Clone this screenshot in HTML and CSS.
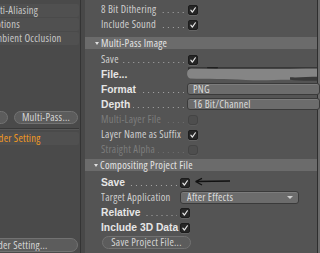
FILE: index.html
```html
<!DOCTYPE html>
<html>
<head>
<meta charset="utf-8">
<link rel="stylesheet" href="styles.css">
</head>
<body>
<div class="app">
  <div class="left">
    <div class="left-inner">
      <div class="item">Anti-Aliasing</div>
      <div class="item">Options</div>
      <div class="item">Ambient Occlusion</div>
      <div class="btn-row">
        <button class="pill btn-l">Buffer View...</button>
        <button class="pill btn-mp">Multi-Pass...</button>
      </div>
      <div class="sep"></div>
      <div class="item active">Render Setting</div>
      <button class="pill btn-bottom">Render Setting...</button>
    </div>
  </div>
  <div class="divider"></div>
  <div class="main">
    <div class="row"><div class="lead"><span>8 Bit Dithering</span><span class="dots"></span></div><span class="cb on"><svg viewBox="0 0 10 10"><path d="M2.3 5.2 L4.2 7.6 L8 2.2"/></svg></span></div>
    <div class="row"><div class="lead"><span>Include Sound</span><span class="dots"></span></div><span class="cb on"><svg viewBox="0 0 10 10"><path d="M2.3 5.2 L4.2 7.6 L8 2.2"/></svg></span></div>

    <div class="hdr"><span class="tri"></span>Multi-Pass Image</div>

    <div class="row"><div class="lead"><span>Save</span><span class="dots"></span></div><span class="cb on"><svg viewBox="0 0 10 10"><path d="M2.3 5.2 L4.2 7.6 L8 2.2"/></svg></span></div>
    <div class="row"><div class="lead"><span class="b">File...</span></div>
      <svg class="scribble" width="133" height="15" viewBox="0 0 133 15">
        <path d="M2 0.2 C30 0 80 0.5 133 0.3 L133 3.2 C80 3.4 30 3 2 3.4 Z" fill="#2f2f2f"/>
        <path d="M21 0 L32 0 L31 4.5 L22 4.5 Z" fill="#1f1f1f"/>
        <path d="M5 1.6 C0.5 2 -0.5 9.5 4 11.5 C20 12.5 40 11.5 60 13 C80 14 95 12.3 105 12.8 C115 13.2 125 12.3 133 12.3 L133 1.6 C100 2 60 1.4 30 1.8 Z" fill="#858585"/>
        <path d="M104 10.3 C112 10.8 122 9.8 133 9.8 L133 13.8 C120 14 110 13.8 104 12.8 Z" fill="#3a3a3a"/>
      </svg>
    </div>
    <div class="row"><div class="lead"><span class="b">Format</span><span class="dots"></span></div><div class="dd wide">PNG</div></div>
    <div class="row"><div class="lead"><span class="b">Depth</span><span class="dots"></span></div><div class="dd wide">16 Bit/Channel</div></div>
    <div class="row dis"><div class="lead"><span>Multi-Layer File</span><span class="dots"></span></div><span class="cb off"></span></div>
    <div class="row"><div class="lead"><span>Layer Name as Suffix</span></div><span class="cb on"><svg viewBox="0 0 10 10"><path d="M2.3 5.2 L4.2 7.6 L8 2.2"/></svg></span></div>
    <div class="row dis"><div class="lead"><span>Straight Alpha</span><span class="dots"></span></div><span class="cb off"></span></div>

    <div class="hdr hdr2"><span class="tri"></span>Compositing Project File</div>

    <div class="sec2">
      <div class="row"><div class="lead"><span class="b">Save</span><span class="dots"></span></div>
        <div class="ctl"><span class="cb on"><svg viewBox="0 0 10 10"><path d="M2.3 5.2 L4.2 7.6 L8 2.2"/></svg></span>
          <svg class="arrow" width="40" height="15" viewBox="0 0 40 15"><path d="M2.5 6.5 L37 6 M2.5 6.5 L9 3.3 M2.5 6.5 L9 10" stroke="#111" stroke-width="1.3" fill="none"/></svg>
        </div>
      </div>
      <div class="row"><div class="lead"><span>Target Application</span></div><div class="dd app-dd">After Effects<span class="arr"></span></div></div>
      <div class="row"><div class="lead"><span class="b">Relative</span><span class="dots"></span></div><span class="cb on"><svg viewBox="0 0 10 10"><path d="M2.3 5.2 L4.2 7.6 L8 2.2"/></svg></span></div>
      <div class="row"><div class="lead"><span class="b">Include 3D Data</span></div><span class="cb on"><svg viewBox="0 0 10 10"><path d="M2.3 5.2 L4.2 7.6 L8 2.2"/></svg></span></div>
      <button class="pill btn-save">Save Project File...</button>
    </div>
  </div>
  <div class="edge"></div>
</div>
</body>
</html>
```
FILE: styles.css
```css
* { box-sizing: border-box; margin: 0; padding: 0; }
html, body { width: 320px; height: 253px; overflow: hidden; background: #545454; }
body {
  font-family: "Open Sans", "Liberation Sans", sans-serif;
  font-stretch: 85%;
  font-size: 10.5px;
  letter-spacing: 0.25px;
  color: #cfcfcf;
}
.app { display: flex; width: 320px; height: 253px; }

/* left column */
.left { width: 80px; flex: none; background: #4a4a4a; overflow: hidden; }
.left-inner {
  margin-left: -16px; width: 95px; height: 100%;
  display: flex; flex-direction: column; padding-top: 4px;
}
.item {
  height: 13px; line-height: 13px; margin-bottom: 1px; flex: none;
  background: #505050; padding-left: 6px; white-space: nowrap;
  border-radius: 0 2px 2px 0; color: #c8c8c8;
}
.item.active { color: #f39a22; padding-left: 0; margin-top: 2px; }
.btn-row { margin-top: 65px; display: flex; justify-content: flex-end; gap: 6px; padding-right: 1px; }
.pill {
  appearance: none; font: inherit; letter-spacing: inherit; height: 13px; line-height: 11px;
  border-radius: 7px; background: #5c5c5c; border: 1px solid #727272;
  color: #d6d6d6; text-align: center; white-space: nowrap; overflow: hidden; flex: none;
}
.btn-l { width: 84px; }
.btn-mp { width: 64px; }
.sep { height: 2px; margin-top: 4px; border-top: 1px solid #383838; border-bottom: 1px solid #575757; flex: none; }
.btn-bottom { width: 125px; margin-left: -31px; margin-top: auto; margin-bottom: 1px; height: 14px; line-height: 12px; }

.divider { width: 5px; flex: none; background: #484848; border-left: 1px solid #343434; }

/* main */
.main { width: 232px; flex: none; padding-top: 2px; display: flex; flex-direction: column; }
.row {
  display: grid; grid-template-columns: 86px auto; align-items: center;
  height: 15px; line-height: 15px; padding-left: 16px; flex: none; white-space: nowrap;
}
.lead { display: flex; height: 15px; padding-right: 3px; overflow: hidden; }
.dots {
  flex: 1; margin-left: 3px;
  background-image: linear-gradient(to right, #a8a8a8 1px, transparent 1px);
  background-size: 5px 1px; background-repeat: repeat-x;
  background-position: right 1px top 10px;
}
.b { font-family: "Liberation Sans", Arial, sans-serif; font-stretch: normal; letter-spacing: 0; font-weight: bold; font-size: 10.3px; color: #e6e6e6; }
.dis { color: #7c7c7c; }
.dis .dots { background-image: linear-gradient(to right, #6e6e6e 1px, transparent 1px); }

.cb {
  width: 10px; height: 10px; margin-left: 1px; border-radius: 2px;
  background: #262626; border: 1px solid #1c1c1c; box-shadow: 0 1px 0 #646464;
  display: block;
}
.cb svg { display: block; width: 8px; height: 8px; }
.cb svg path { fill: none; stroke: #e6e6e6; stroke-width: 1.5; stroke-linecap: round; stroke-linejoin: round; }
.cb.off { background: #4e4e4e; border: 1px solid #444; box-shadow: 0 1px 0 #5c5c5c; border-radius: 3px; }

.hdr {
  height: 12px; margin: 5px 0 3px; background: #6b6b6b; color: #e4e4e4;
  display: flex; align-items: center; padding-left: 10px; line-height: 12px; flex: none;
}
.hdr2 { margin: 2px 0 4px; padding-left: 9px; }
.tri {
  width: 0; height: 0; margin-right: 2px; margin-top: 1px;
  border-left: 2.5px solid transparent; border-right: 2.5px solid transparent; border-top: 3px solid #e0e0e0;
}

.scribble { display: block; margin-left: -1px; align-self: start; }

.dd {
  height: 12px; line-height: 10px; border-radius: 3px;
  background: #6c6c6c; border: 1px solid #3a3a3a; box-shadow: inset 0 1px 0 #7c7c7c;
  color: #dcdcdc; padding-left: 5px; position: relative; align-self: start; margin-top: 1px;
}
.dd.wide { width: 133px; }

.sec2 .row { grid-template-columns: 79px auto; }
.ctl { display: flex; align-items: center; }
.arrow { display: block; margin-left: 3px; }
.sec2 .cb { margin-left: 0; }
.app-dd { width: 119px; height: 13px; line-height: 11px; padding-left: 6px; margin-top: 1px; }
.arr {
  position: absolute; right: 5px; top: 4px; width: 0; height: 0;
  border-left: 3px solid transparent; border-right: 3px solid transparent; border-top: 3px solid #cfcfcf;
}
.btn-save { width: 89px; margin-left: 17px; margin-top: 1px; }

.edge { width: 3px; flex: none; background: #6a6a6a; border-left: 1px solid #2e2e2e; }
```
